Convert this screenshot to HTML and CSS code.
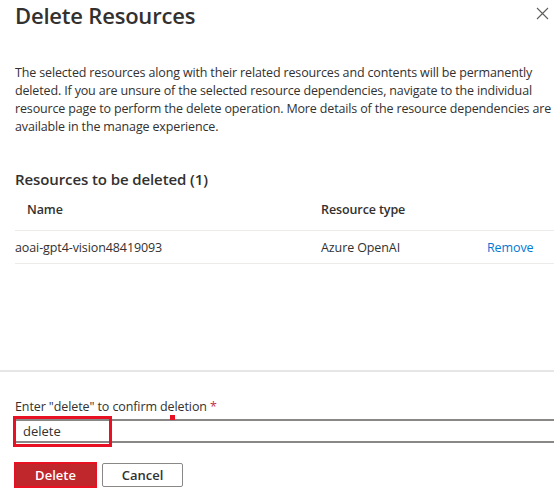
FILE: index.html
```html
<!DOCTYPE html>
<html lang="en">
<head>
<meta charset="utf-8">
<title>Delete Resources</title>
<link rel="stylesheet" href="styles.css">
</head>
<body>
<div class="panel">
  <header class="head">
    <h1 class="title">Delete Resources</h1>
    <button class="close" aria-label="Close">
      <svg width="13" height="13" viewBox="0 0 13 13"><path d="M1 1L12 12M12 1L1 12" stroke="#605e5c" stroke-width="1.1" fill="none"/></svg>
    </button>
  </header>
  <p class="desc">The selected resources along with their related resources and contents will be permanently<br>deleted. If you are unsure of the selected resource dependencies, navigate to the individual<br>resource page to perform the delete operation. More details of the resource dependencies are<br>available in the manage experience.</p>
  <h2 class="sub">Resources to be deleted (1)</h2>
  <div class="table">
    <div class="row hrow">
      <span class="hname">Name</span>
      <span>Resource type</span>
      <span></span>
    </div>
    <div class="row drow">
      <span>aoai-gpt4-vision48419093</span>
      <span>Azure OpenAI</span>
      <a class="link" href="#">Remove</a>
    </div>
  </div>
</div>
<footer class="foot">
  <label class="lbl" for="confirm">Enter "delete" to confirm deletion <span class="req">*</span></label>
  <div class="field">
    <input id="confirm" class="inp" type="text" value="delete">
    <span class="mark-input"></span>
    <span class="mark-dot"></span>
  </div>
  <div class="btns">
    <button class="btn primary">Delete<span class="mark-btn"></span></button>
    <button class="btn">Cancel</button>
  </div>
</footer>
</body>
</html>
```
FILE: styles.css
```css
html, body {
  margin: 0;
  padding: 0;
  background: #fff;
}
body {
  width: 554px;
  height: 492px;
  overflow: hidden;
  font-family: "Open Sans", "Noto Sans", sans-serif;
  color: #323130;
}
.panel {
  padding: 0 0 0 15px;
}
.head {
  display: flex;
  justify-content: space-between;
  align-items: flex-start;
  height: 30px;
}
.title {
  margin: 0;
  font-size: 22px;
  font-weight: 600;
  line-height: 30px;
  letter-spacing: -0.2px;
  color: #323130;
}
.close {
  border: 0;
  background: none;
  padding: 0;
  margin: 7px 5px 0 0;
  width: 13px;
  height: 13px;
  display: flex;
}
.desc {
  margin: 34px 0 0 0;
  font-size: 12.5px;
  line-height: 18px;
  white-space: nowrap;
  letter-spacing: -0.15px;
}
.sub {
  margin: 33px 0 0 0;
  font-size: 15px;
  font-weight: 600;
  line-height: 20px;
  letter-spacing: -0.1px;
}
.table {
  margin-top: 5px;
  font-size: 12.5px;
  letter-spacing: -0.1px;
}
.row {
  display: grid;
  grid-template-columns: 306px 166px 1fr;
  align-items: center;
  box-sizing: border-box;
}
.hrow {
  height: 37px;
  padding-bottom: 5px;
  font-weight: 600;
  border-bottom: 1px solid #edebe9;
}
.hname {
  padding-left: 12px;
}
.drow {
  height: 33px;
  border-bottom: 1px solid #edebe9;
}
.link {
  color: #0078d4;
  text-decoration: none;
}
.foot {
  position: absolute;
  left: 0;
  right: 0;
  top: 370px;
  border-top: 2px solid #e6e6e6;
  padding: 27px 0 0 15px;
}
.lbl {
  display: block;
  font-size: 12.5px;
  line-height: 16px;
  letter-spacing: -0.1px;
}
.req {
  color: #c4314b;
}
.field {
  position: relative;
  margin-top: 4px;
}
.inp {
  display: block;
  box-sizing: border-box;
  width: 100%;
  height: 24px;
  margin: 0;
  border: 0;
  border-top: 2px solid #8a8886;
  border-bottom: 2px solid #8a8886;
  padding: 0 8px;
  font-family: inherit;
  font-size: 13px;
  color: #323130;
  outline: none;
  background: #fff;
}
.mark-input {
  position: absolute;
  left: -2px;
  top: -3px;
  width: 93px;
  height: 25px;
  border: 3px solid #e81123;
  pointer-events: none;
}
.mark-dot {
  position: absolute;
  left: 155px;
  top: -4px;
  width: 5px;
  height: 5px;
  background: #e81123;
}
.btns {
  display: flex;
  gap: 6px;
  margin-top: 20px;
}
.btn {
  position: relative;
  box-sizing: border-box;
  width: 81px;
  height: 24px;
  border: 1px solid #8a8886;
  border-radius: 2px;
  background: #fff;
  font-family: inherit;
  font-size: 13px;
  font-weight: 600;
  color: #323130;
  padding: 0;
}
.btn.primary {
  background: #c0272d;
  border-color: #c0272d;
  color: #fff;
}
.mark-btn {
  position: absolute;
  left: -2px;
  top: -2px;
  right: -2px;
  bottom: -2px;
  border: 2px solid #e81123;
}
```
